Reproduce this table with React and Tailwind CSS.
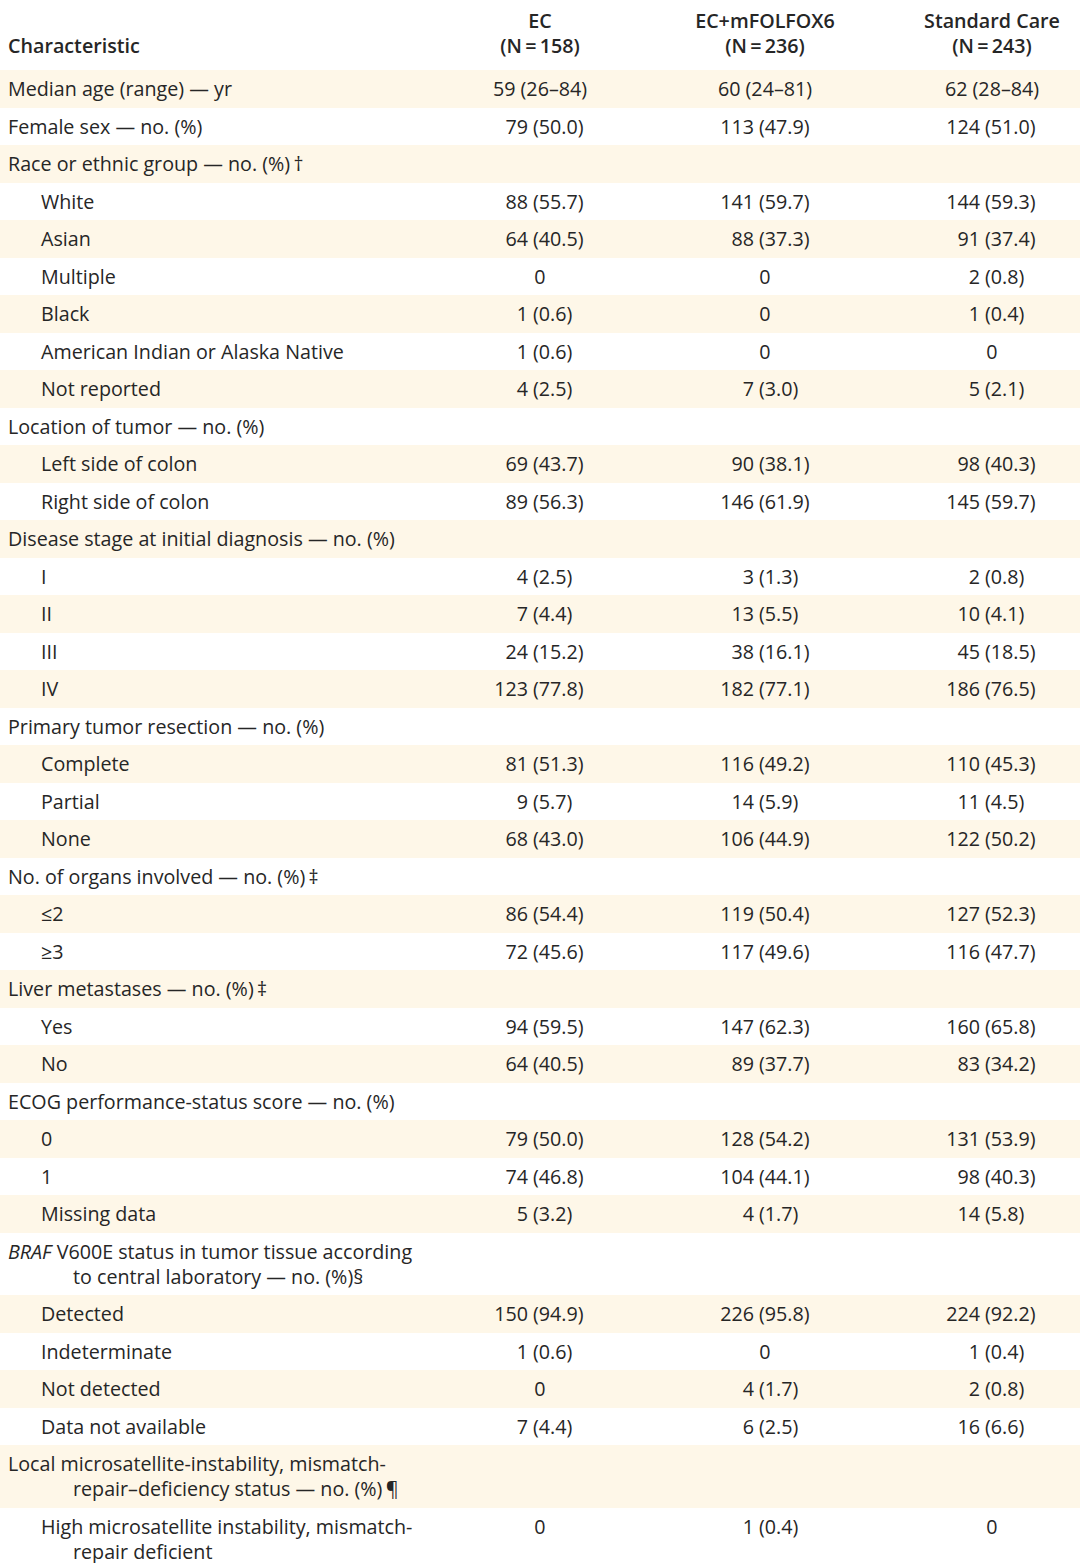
import React from "react";

// column layout: label | EC | EC+mFOLFOX6 | Standard Care
const GRID = "grid grid-cols-[454px_172px_278px_176px]";

// width of the box holding the count, so the "(" lines up in each column
const countWidth = ["w-[74px]", "w-[128px]", "w-[76px]"];

const rows = [
  { label: "Median age (range) — yr", v: ["59 (26–84)", "60 (24–81)", "62 (28–84)"], center: true },
  { label: "Female sex — no. (%)", v: ["79 (50.0)", "113 (47.9)", "124 (51.0)"] },
  { label: "Race or ethnic group — no. (%)\u2009†" },
  { label: "White", sub: true, v: ["88 (55.7)", "141 (59.7)", "144 (59.3)"] },
  { label: "Asian", sub: true, v: ["64 (40.5)", "88 (37.3)", "91 (37.4)"] },
  { label: "Multiple", sub: true, v: ["0", "0", "2 (0.8)"] },
  { label: "Black", sub: true, v: ["1 (0.6)", "0", "1 (0.4)"] },
  { label: "American Indian or Alaska Native", sub: true, v: ["1 (0.6)", "0", "0"] },
  { label: "Not reported", sub: true, v: ["4 (2.5)", "7 (3.0)", "5 (2.1)"] },
  { label: "Location of tumor — no. (%)" },
  { label: "Left side of colon", sub: true, v: ["69 (43.7)", "90 (38.1)", "98 (40.3)"] },
  { label: "Right side of colon", sub: true, v: ["89 (56.3)", "146 (61.9)", "145 (59.7)"] },
  { label: "Disease stage at initial diagnosis — no. (%)" },
  { label: "I", sub: true, v: ["4 (2.5)", "3 (1.3)", "2 (0.8)"] },
  { label: "II", sub: true, v: ["7 (4.4)", "13 (5.5)", "10 (4.1)"] },
  { label: "III", sub: true, v: ["24 (15.2)", "38 (16.1)", "45 (18.5)"] },
  { label: "IV", sub: true, v: ["123 (77.8)", "182 (77.1)", "186 (76.5)"] },
  { label: "Primary tumor resection — no. (%)" },
  { label: "Complete", sub: true, v: ["81 (51.3)", "116 (49.2)", "110 (45.3)"] },
  { label: "Partial", sub: true, v: ["9 (5.7)", "14 (5.9)", "11 (4.5)"] },
  { label: "None", sub: true, v: ["68 (43.0)", "106 (44.9)", "122 (50.2)"] },
  { label: "No. of organs involved — no. (%)\u2009‡" },
  { label: "≤2", sub: true, v: ["86 (54.4)", "119 (50.4)", "127 (52.3)"] },
  { label: "≥3", sub: true, v: ["72 (45.6)", "117 (49.6)", "116 (47.7)"] },
  { label: "Liver metastases — no. (%)\u2009‡" },
  { label: "Yes", sub: true, v: ["94 (59.5)", "147 (62.3)", "160 (65.8)"] },
  { label: "No", sub: true, v: ["64 (40.5)", "89 (37.7)", "83 (34.2)"] },
  { label: "ECOG performance-status score — no. (%)" },
  { label: "0", sub: true, v: ["79 (50.0)", "128 (54.2)", "131 (53.9)"] },
  { label: "1", sub: true, v: ["74 (46.8)", "104 (44.1)", "98 (40.3)"] },
  { label: "Missing data", sub: true, v: ["5 (3.2)", "4 (1.7)", "14 (5.8)"] },
  {
    label: (
      <>
        <i>BRAF</i> V600E status in tumor tissue according to central laboratory — no. (%)§
      </>
    ),
  },
  { label: "Detected", sub: true, v: ["150 (94.9)", "226 (95.8)", "224 (92.2)"] },
  { label: "Indeterminate", sub: true, v: ["1 (0.6)", "0", "1 (0.4)"] },
  { label: "Not detected", sub: true, v: ["0", "4 (1.7)", "2 (0.8)"] },
  { label: "Data not available", sub: true, v: ["7 (4.4)", "6 (2.5)", "16 (6.6)"] },
  { label: "Local microsatellite-instability, mismatch-repair–deficiency status — no. (%)\u2009¶" },
  { label: "High microsatellite instability, mismatch-repair deficient", sub: true, v: ["0", "1 (0.4)", "0"] },
];

const Value = ({ text, col, center }) => {
  if (!text) return <div />;
  const idx = text.indexOf(" (");
  if (center || idx === -1) {
    return <div className="text-center">{text}</div>;
  }
  return (
    <div className="flex">
      <span className={`${countWidth[col]} shrink-0 text-right`}>{text.slice(0, idx)}</span>
      <span className="pl-[5px] whitespace-nowrap">{text.slice(idx + 1)}</span>
    </div>
  );
};

export default function App() {
  return (
    <div
      className="w-[1080px] bg-white text-[19.7px] leading-[25px] text-[#262626]"
      style={{ fontFamily: '"Open Sans", "Noto Sans", sans-serif' }}
    >
      {/* Header */}
      <div className={`${GRID} h-[70px] items-end pb-[12px] font-semibold`}>
        <div className="pl-[8px]">Characteristic</div>
        <div className="text-center">
          EC
          <br />
          (N{"\u2009=\u2009"}158)
        </div>
        <div className="text-center">
          EC+mFOLFOX6
          <br />
          (N{"\u2009=\u2009"}236)
        </div>
        <div className="text-center">
          Standard Care
          <br />
          (N{"\u2009=\u2009"}243)
        </div>
      </div>

      {/* Body */}
      {rows.map((row, i) => (
        <div
          key={i}
          className={`${GRID} items-start py-[6.25px] ${i % 2 === 0 ? "bg-[#fef7e8]" : "bg-white"}`}
        >
          <div
            className={`pl-[73px] pr-[26px] ${row.sub ? "indent-[-32px]" : "indent-[-65px]"}`}
          >
            {row.label}
          </div>
          {[0, 1, 2].map((c) => (
            <Value key={c} text={row.v && row.v[c]} col={c} center={row.center} />
          ))}
        </div>
      ))}
    </div>
  );
}
